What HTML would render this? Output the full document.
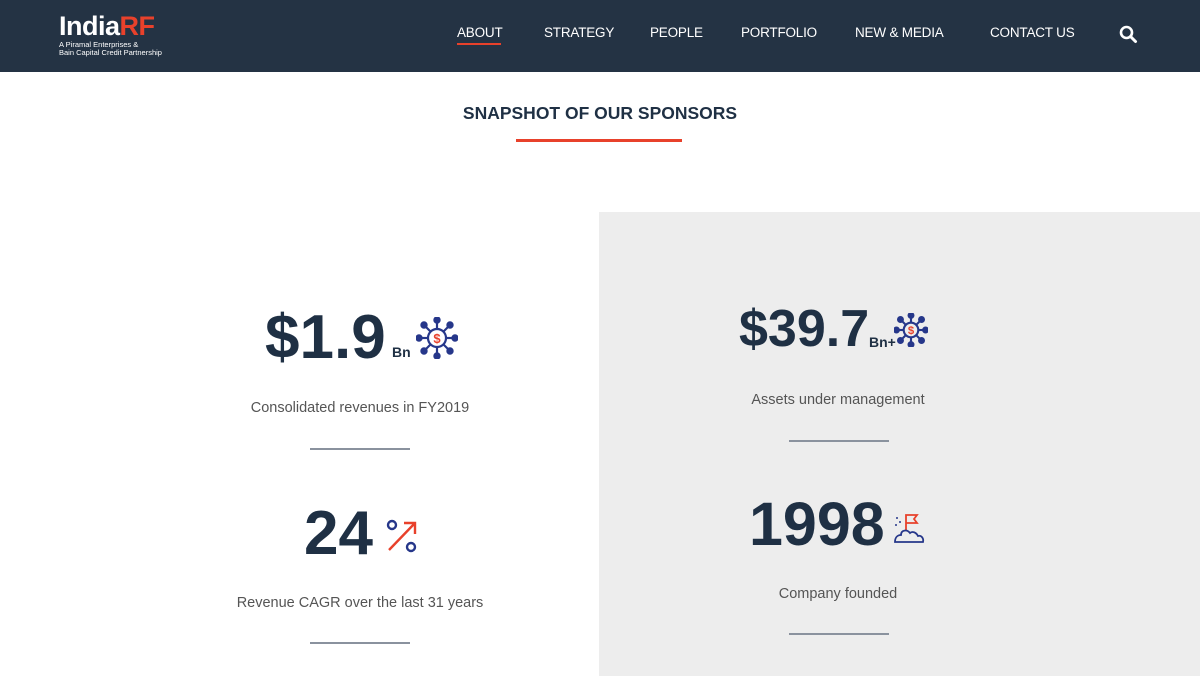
<!DOCTYPE html>
<html><head><meta charset="utf-8"><style>
*{margin:0;padding:0;box-sizing:border-box}
body{width:1200px;height:676px;overflow:hidden;background:#fff;font-family:"Liberation Sans",sans-serif;position:relative;color:#1f3044}
.nav{position:absolute;left:0;top:0;width:1200px;height:72px;background:#243344}
.logo{position:absolute;left:59px;top:12px;color:#fff}
.logo .t{font-size:27px;font-weight:bold;letter-spacing:-0.5px;line-height:28px}
.logo .t span{color:#e8412b}
.logo .s{font-size:7.5px;line-height:8px;margin-top:1px}
.nav a{position:absolute;top:25px;color:#fff;font-size:13.5px;text-decoration:none;white-space:nowrap;letter-spacing:-0.2px}
.ul{position:absolute;left:457px;top:43px;width:44px;height:2px;background:#e8412b}
.title{position:absolute;top:103px;left:0;width:1200px;text-align:center;font-size:17.5px;font-weight:bold;color:#1f3044}
.red{position:absolute;left:516px;top:139px;width:166px;height:3px;background:#e8412b}
.panel{position:absolute;left:599px;top:212px;width:601px;height:464px;background:#ededed}
.num{position:absolute;font-weight:bold;color:#1f3044;white-space:nowrap;line-height:1}
.cap{position:absolute;width:400px;text-align:center;font-size:14.5px;color:#555}
.ln{position:absolute;width:100px;height:2px;background:#8a929e}
.sub{position:absolute;font-size:14px;font-weight:bold;color:#1f3044}
svg{position:absolute}
</style></head><body>
<div class="nav">
 <div class="logo"><div class="t">India<span>RF</span></div><div class="s">A Piramal Enterprises &amp;<br>Bain Capital Credit Partnership</div></div>
 <a style="left:457px">ABOUT</a><a style="left:544px">STRATEGY</a><a style="left:650px">PEOPLE</a><a style="left:741px">PORTFOLIO</a><a style="left:855px">NEW &amp; MEDIA</a><a style="left:990px">CONTACT US</a>
 <div class="ul"></div>
 <svg style="left:1119px;top:25px" width="19" height="19" viewBox="0 0 19 19"><circle cx="7.5" cy="7.5" r="5.5" fill="none" stroke="#fff" stroke-width="2.6"/><line x1="11.5" y1="11.5" x2="16.5" y2="16.5" stroke="#fff" stroke-width="3" stroke-linecap="round"/></svg>
</div>
<div class="title">SNAPSHOT OF OUR SPONSORS</div>
<div class="red"></div>
<div class="panel"></div>

<div class="num" style="left:265px;top:307px;font-size:62px">$1.9</div>
<div class="sub" style="left:392px;top:344px">Bn</div>
<svg style="left:416px;top:317px" width="42" height="42" viewBox="0 0 42 42"><g stroke="#26378a" stroke-width="2.2" fill="#26378a"><circle cx="21" cy="21" r="9" fill="none"/><line x1="21" y1="3" x2="21" y2="12"/><line x1="21" y1="30" x2="21" y2="39"/><line x1="3" y1="21" x2="12" y2="21"/><line x1="30" y1="21" x2="39" y2="21"/><line x1="8" y1="8" x2="14.6" y2="14.6"/><line x1="34" y1="34" x2="27.4" y2="27.4"/><line x1="34" y1="8" x2="27.4" y2="14.6"/><line x1="8" y1="34" x2="14.6" y2="27.4"/><circle cx="21" cy="3" r="2.6"/><circle cx="21" cy="39" r="2.6"/><circle cx="3" cy="21" r="2.6"/><circle cx="39" cy="21" r="2.6"/><circle cx="8" cy="8" r="2.6"/><circle cx="34" cy="34" r="2.6"/><circle cx="34" cy="8" r="2.6"/><circle cx="8" cy="34" r="2.6"/></g><text x="21" y="26" font-size="13" font-weight="bold" fill="#e8412b" text-anchor="middle" font-family="Liberation Sans">$</text></svg>
<div class="cap" style="left:160px;top:400px">Consolidated revenues in FY2019</div>
<div class="ln" style="left:310px;top:448px"></div>

<div class="num" style="left:304px;top:503px;font-size:62px">24</div>
<svg style="left:385px;top:518px" width="34" height="36" viewBox="0 0 34 36"><circle cx="7" cy="7" r="4" fill="none" stroke="#26378a" stroke-width="2.4"/><circle cx="26" cy="29" r="4" fill="none" stroke="#26378a" stroke-width="2.4"/><path d="M4 32 L30 5 M19 5 H30 V16" fill="none" stroke="#e8412b" stroke-width="2.4"/></svg>
<div class="cap" style="left:160px;top:595px">Revenue CAGR over the last 31 years</div>
<div class="ln" style="left:310px;top:642px"></div>

<div class="num" style="left:739px;top:303px;font-size:52px">$39.7</div>
<div class="sub" style="left:869px;top:334px">Bn+</div>
<svg style="left:894px;top:313px" width="34" height="34" viewBox="0 0 42 42"><g stroke="#26378a" stroke-width="2.6" fill="#26378a"><circle cx="21" cy="21" r="9" fill="none"/><line x1="21" y1="3" x2="21" y2="12"/><line x1="21" y1="30" x2="21" y2="39"/><line x1="3" y1="21" x2="12" y2="21"/><line x1="30" y1="21" x2="39" y2="21"/><line x1="8" y1="8" x2="14.6" y2="14.6"/><line x1="34" y1="34" x2="27.4" y2="27.4"/><line x1="34" y1="8" x2="27.4" y2="14.6"/><line x1="8" y1="34" x2="14.6" y2="27.4"/><circle cx="21" cy="3" r="3"/><circle cx="21" cy="39" r="3"/><circle cx="3" cy="21" r="3"/><circle cx="39" cy="21" r="3"/><circle cx="8" cy="8" r="3"/><circle cx="34" cy="34" r="3"/><circle cx="34" cy="8" r="3"/><circle cx="8" cy="34" r="3"/></g><text x="21" y="26" font-size="14" font-weight="bold" fill="#e8412b" text-anchor="middle" font-family="Liberation Sans">$</text></svg>
<div class="cap" style="left:638px;top:392px">Assets under management</div>
<div class="ln" style="left:789px;top:440px"></div>

<div class="num" style="left:749px;top:494px;font-size:61px">1998</div>
<svg style="left:893px;top:512px" width="32" height="32" viewBox="0 0 32 32"><path d="M13 18 V3 H24 L21 7 L24 11 H13" fill="none" stroke="#e8412b" stroke-width="1.8"/><path d="M2 30 H30 C31 26 28 23 25 24 C23 20 19 19 17 21 C14 17 8 18 8 23 C4 23 2 26 2 30 Z" fill="none" stroke="#26378a" stroke-width="1.8"/><circle cx="4" cy="6" r="1" fill="#26378a"/><circle cx="7" cy="10" r="1" fill="#26378a"/><circle cx="3" cy="13" r="1" fill="#26378a"/></svg>
<div class="cap" style="left:638px;top:586px">Company founded</div>
<div class="ln" style="left:789px;top:633px"></div>
</body></html>
